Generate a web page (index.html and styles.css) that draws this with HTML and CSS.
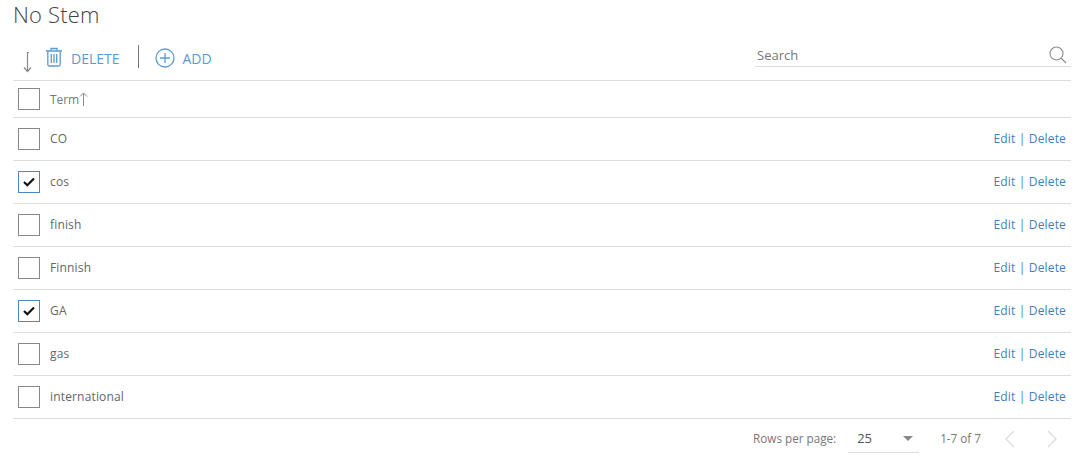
FILE: index.html
```html
<!DOCTYPE html>
<html lang="en">
<head>
<meta charset="utf-8">
<title>No Stem</title>
<link rel="stylesheet" href="styles.css">
</head>
<body>
<main class="page">
  <h1 class="title">No Stem</h1>
  <div class="toolbar">
    <div class="actions">
      <svg class="sort-icon" width="12" height="22" viewBox="0 0 12 22"><path d="M7 1.500H5.500V20M2 16.500L5.500 20.500L9 16.500" fill="none" stroke="#8a8a8a" stroke-width="1.200"/></svg>
      <button class="action action-delete">
        <svg width="18" height="20" viewBox="0 0 18 20"><path d="M1 4H17M6 4V1.500H12V4M2.800 4V17.500Q2.800 19 4.300 19H13.700Q15.200 19 15.200 17.500V4M6.300 7V16M9 7V16M11.700 7V16" fill="none" stroke="#5b9bd5" stroke-width="1.300"/></svg>
        DELETE
      </button>
      <span class="divider"></span>
      <button class="action">
        <svg width="20" height="20" viewBox="0 0 20 20"><circle cx="10" cy="10" r="9" fill="none" stroke="#5b9bd5" stroke-width="1.300"/><path d="M10 5V15M5 10H15" stroke="#5b9bd5" stroke-width="1.300"/></svg>
        ADD
      </button>
    </div>
    <div class="search">
      <span class="search-label">Search</span>
      <svg width="18" height="18" viewBox="0 0 18 18"><circle cx="7.500" cy="7.500" r="6.500" fill="none" stroke="#8a8a8a" stroke-width="1.100"/><path d="M12 12L17 17" stroke="#8a8a8a" stroke-width="1.100"/></svg>
    </div>
  </div>
  <div class="table">
    <div class="row head">
      <span class="check"></span>
      <span class="term">Term<svg class="up" width="9" height="14" viewBox="0 0 9 14"><path d="M4.500 14V1M1 4.500L4.500 1L8 4.500" fill="none" stroke="#8a8a8a" stroke-width="1"/></svg></span>
    </div>
    <div class="row"><span class="check"></span><span class="term">CO</span><span class="links"><a>Edit</a> | <a>Delete</a></span></div>
    <div class="row"><span class="check on"><svg width="12" height="10" viewBox="0 0 12 10"><path d="M1 5L4.300 8.200L11 1.500" fill="none" stroke="#111" stroke-width="2.200"/></svg></span><span class="term">cos</span><span class="links"><a>Edit</a> | <a>Delete</a></span></div>
    <div class="row"><span class="check"></span><span class="term">finish</span><span class="links"><a>Edit</a> | <a>Delete</a></span></div>
    <div class="row"><span class="check"></span><span class="term">Finnish</span><span class="links"><a>Edit</a> | <a>Delete</a></span></div>
    <div class="row"><span class="check on"><svg width="12" height="10" viewBox="0 0 12 10"><path d="M1 5L4.300 8.200L11 1.500" fill="none" stroke="#111" stroke-width="2.200"/></svg></span><span class="term">GA</span><span class="links"><a>Edit</a> | <a>Delete</a></span></div>
    <div class="row"><span class="check"></span><span class="term">gas</span><span class="links"><a>Edit</a> | <a>Delete</a></span></div>
    <div class="row"><span class="check"></span><span class="term">international</span><span class="links"><a>Edit</a> | <a>Delete</a></span></div>
  </div>
  <div class="pager">
    <span class="rows-label">Rows per page:</span>
    <span class="select"><span>25</span><i class="caret"></i></span>
    <span class="range">1-7 of 7</span>
    <svg class="nav" width="14" height="18" viewBox="0 0 14 18"><path d="M11 1L3 9L11 17" fill="none" stroke="#dcdcdc" stroke-width="1.300"/></svg>
    <svg class="nav" width="14" height="18" viewBox="0 0 14 18"><path d="M3 1L11 9L3 17" fill="none" stroke="#dcdcdc" stroke-width="1.300"/></svg>
  </div>
</main>
</body>
</html>
```
FILE: styles.css
```css
* { box-sizing: border-box; }
html, body { margin: 0; background: #fff; }
body { font-family: "Open Sans", sans-serif; color: #555; font-size: 12px; }
.page { width: 1085px; height: 463px; padding: 0 14px 0 13px; overflow: hidden; }
.title { margin: 0; font-size: 22px; font-weight: 300; line-height: 30px; height: 32px; color: #444; letter-spacing: .2px; transform: translateY(-1px); }
.toolbar { display: flex; justify-content: space-between; align-items: flex-start; height: 49px; border-bottom: 1px solid #ddd; }
.actions { display: flex; align-items: center; height: 36px; margin-top: 8px; padding-left: 9px; }
.sort-icon { margin-top: 8px; margin-right: 11px; }
.action { display: flex; align-items: center; gap: 8px; border: 0; background: none; padding: 0; font: 14px "Open Sans", sans-serif; color: #5b9bd5; }
.action-delete svg { margin-top: -2px; }
.divider { width: 1px; height: 23px; background: #777; margin: -3px 16px 0 18px; }
.search { display: flex; justify-content: space-between; align-items: center; width: 316px; height: 24px; margin-top: 11px; padding: 0 4px 0 2px; border-bottom: 1px solid #ddd; }
.search-label { font-size: 13px; color: #777; }
.row { display: flex; align-items: center; height: 43px; border-bottom: 1px solid #ddd; padding-left: 5px; }
.row.head { height: 37px; }
.row .term, .row .links { position: relative; top: -1px; letter-spacing: .16px; }
.check { display: flex; align-items: center; justify-content: center; width: 22px; height: 22px; border: 1px solid #888; flex: none; }
.check.on { border-color: #4a86c8; }
.term { margin-left: 10px; display: flex; align-items: center; color: #666; }
.row.head .term { top: 0; letter-spacing: -.1px; color: #777; }
.up { margin-top: -1px; }
.links { margin-left: auto; padding-right: 5px; color: #3f7fc1; }
.pager { display: flex; align-items: center; justify-content: flex-end; height: 40px; color: #777; padding-right: 12px; }
.rows-label { font-size: 11.700px; margin-top: -3px; }
.select { display: flex; justify-content: space-between; align-items: center; width: 71px; height: 28px; margin: 0 21px 0 12px; padding: 0 6px 1px 9px; font-size: 13px; color: #555; border-bottom: 1px solid #ddd; }
.caret { width: 0; height: 0; border: 5px solid transparent; border-top: 5px solid #888; border-bottom: 0; }
.range { margin-right: 22px; margin-top: -2px; font-size: 11.700px; }
.nav + .nav { margin-left: 28px; }
```
